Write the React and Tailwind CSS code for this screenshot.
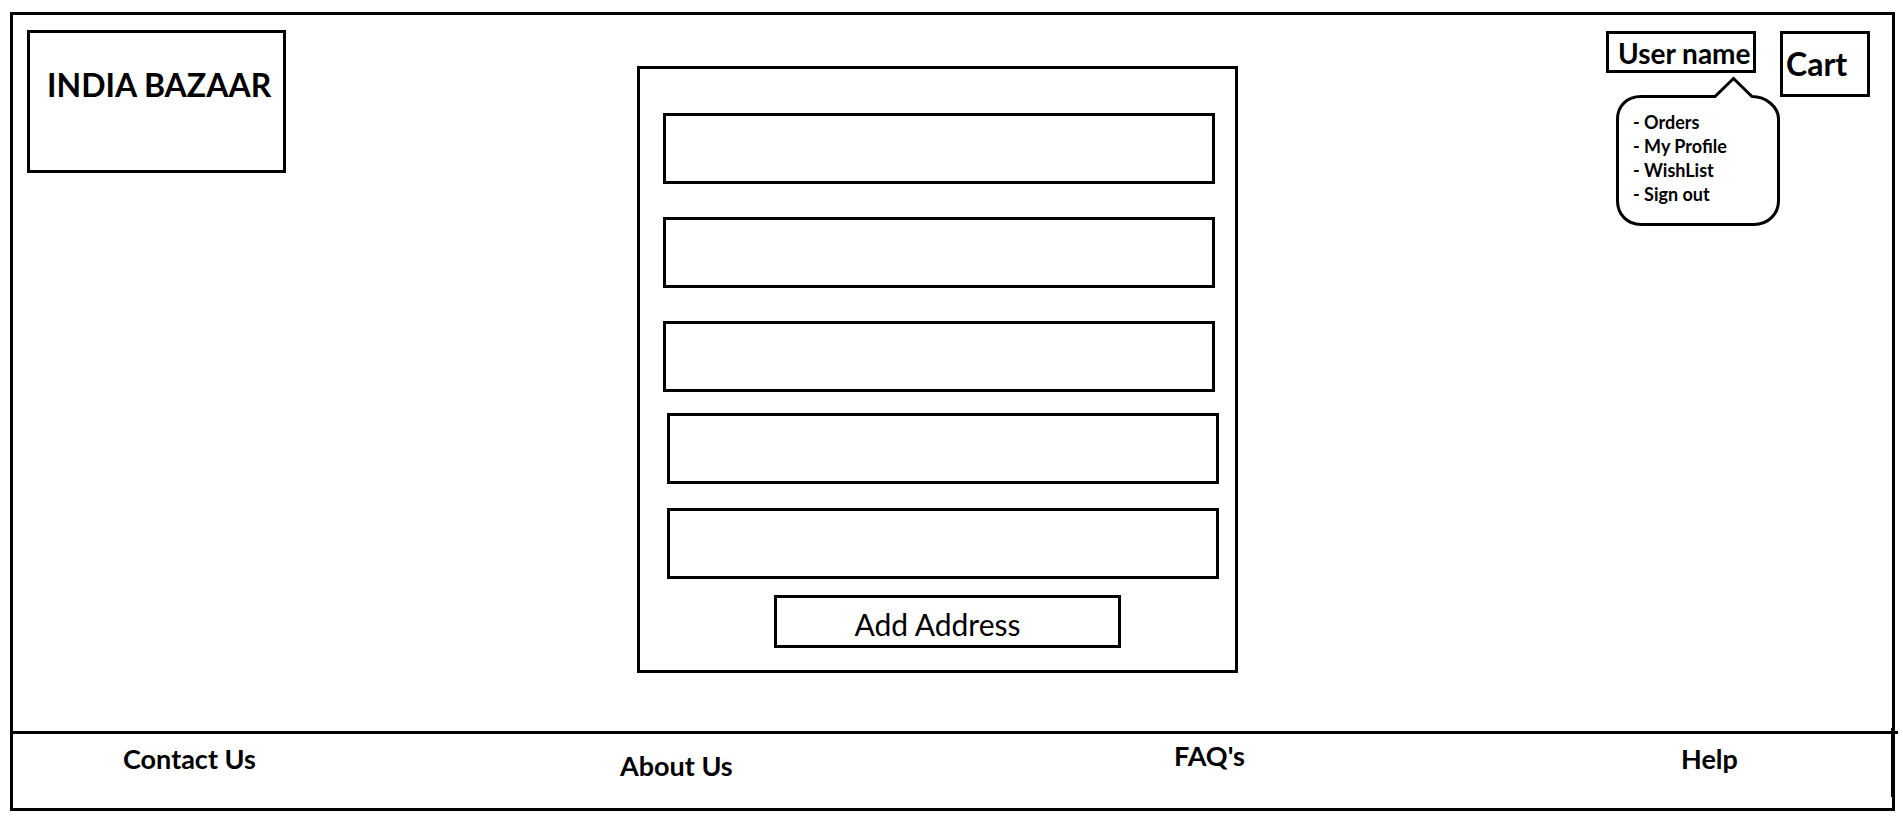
const menu = ["Orders", "My Profile", "WishList", "Sign out"];

function Field({ label }) {
  return (
    <input
      type="text"
      aria-label={label}
      className="block h-[71px] w-full border-3 border-black bg-white px-4 text-2xl outline-none"
    />
  );
}

export default function App() {
  return (
    <div className="flex min-h-screen flex-col bg-white pt-3 pr-2 pb-[14px] pl-[10px] font-[Lato,sans-serif] text-black">
      <div className="flex grow flex-col border-3 border-black">
        <div className="grid grow grid-cols-[624fr_601px_654fr] items-start">
          <header className="pt-[15px] pl-[14px]">
            <h1 className="h-[143px] w-[259px] border-3 border-black pt-8 pl-[17px] text-[32px] leading-[40px] font-bold whitespace-nowrap">
              INDIA BAZAAR
            </h1>
          </header>

          <form
            className="mt-[51px] mb-[58px] flex flex-col border-3 border-black pt-[44px] pb-[22px]"
            onSubmit={(e) => e.preventDefault()}
          >
            <div className="mr-[20px] ml-[23px] flex flex-col gap-[33px]">
              <Field label="Full name" />
              <Field label="Street" />
              <Field label="City" />
            </div>
            <div className="mt-[21px] mr-[16px] ml-[27px] flex flex-col gap-6">
              <Field label="State" />
              <Field label="Postal code" />
            </div>
            <button
              type="submit"
              className="mt-4 ml-[134px] h-[53px] w-[347px] border-3 border-black pt-1 pr-5 text-[30px] leading-[40px]"
            >
              Add Address
            </button>
          </form>

          <nav className="flex items-start justify-end gap-6 pt-4 pr-[22px]">
            <div className="relative">
              <button
                type="button"
                className="block h-[42px] w-[150px] border-3 border-black pt-px pl-[9px] text-left text-[28px] leading-[36px] font-bold whitespace-nowrap"
              >
                User name
              </button>
              <div className="absolute top-[45px] left-[10px] h-[150px] w-[164px]">
                <svg
                  className="absolute inset-0"
                  width="164"
                  height="150"
                  viewBox="0 0 164 150"
                  fill="white"
                  stroke="black"
                  strokeWidth="3"
                  aria-hidden="true"
                >
                  <path d="M25 20.500H99L117.500 2.500L136 20.500C150 20.500 162.500 31 162.500 43V125C162.500 138 152 148.500 138 148.500H25C11 148.500 1.500 138 1.500 125V43C1.500 30 11 20.500 25 20.500Z" />
                </svg>
                <ul className="relative pt-[34px] pl-[17px] text-[18px] leading-6 font-bold">
                  {menu.map((item) => (
                    <li key={item}>
                      <a href="#">- {item}</a>
                    </li>
                  ))}
                </ul>
              </div>
            </div>
            <button
              type="button"
              className="h-[66px] w-[90px] border-3 border-black pl-[3px] text-left text-[32px] font-bold"
            >
              Cart
            </button>
          </nav>
        </div>

        <footer className="relative -mr-[6px] border-t-3 border-black">
          <nav className="grid h-[74px] grid-cols-[497fr_554fr_507fr_217fr] items-start pt-[6px] pl-[110px] text-[27px] leading-8 font-bold">
            <a href="#" className="pt-[3px]">Contact Us</a>
            <a href="#" className="pt-[10px]">About Us</a>
            <a href="#">FAQ's</a>
            <a href="#" className="pt-[3px]">Help</a>
          </nav>
          <span aria-hidden="true" className="absolute -top-[6px] right-1 h-[69px] w-[3px] bg-black" />
        </footer>
      </div>
    </div>
  );
}
